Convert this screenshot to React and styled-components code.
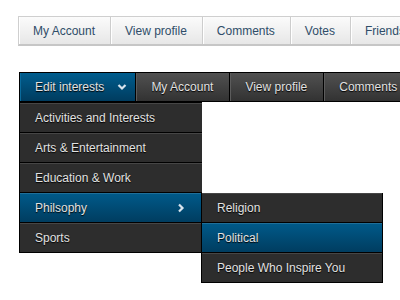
import styled, { createGlobalStyle } from "styled-components";

const GlobalStyle = createGlobalStyle`
  body {
    margin: 0;
    background: #fff;
    font-family: "Liberation Sans", Arial, sans-serif;
  }
`;

const lightItems = ["My Account", "View profile", "Comments", "Votes", "Friends"];
const darkItems = ["My Account", "View profile", "Comments", "Votes"];
const interests = [
  { label: "Activities and Interests" },
  { label: "Arts & Entertainment" },
  { label: "Education & Work" },
  { label: "Philsophy", active: true, sub: true },
  { label: "Sports" },
];
const subItems = [
  { label: "Religion" },
  { label: "Political", active: true },
  { label: "People Who Inspire You" },
];

const ChevronDown = () => (
  <svg width="10" height="8" viewBox="0 0 10 8">
    <polyline points="1.5,2 5,5.5 8.5,2" fill="none" stroke="#d8e4ee" strokeWidth="2.2" />
  </svg>
);

const ChevronRight = () => (
  <svg width="8" height="10" viewBox="0 0 8 10">
    <polyline points="2,1.5 5.5,5 2,8.5" fill="none" stroke="#d8e4ee" strokeWidth="2.2" />
  </svg>
);

const App = () => (
  <Page>
    <GlobalStyle />
    <LightBar>
      {lightItems.map((item) => (
        <LightItem key={item}>{item}</LightItem>
      ))}
    </LightBar>

    <DarkBar>
      <DarkItem $active>
        Edit interests
        <ChevronDown />
        <Dropdown>
          {interests.map((it) => (
            <MenuRow key={it.label} $active={it.active}>
              {it.label}
              {it.sub && <ChevronRight />}
              {it.sub && (
                <SubMenu>
                  {subItems.map((s) => (
                    <MenuRow key={s.label} $active={s.active}>
                      {s.label}
                    </MenuRow>
                  ))}
                </SubMenu>
              )}
            </MenuRow>
          ))}
        </Dropdown>
      </DarkItem>
      {darkItems.map((item) => (
        <DarkItem key={item}>{item}</DarkItem>
      ))}
    </DarkBar>
  </Page>
);

const Page = styled.div`
  width: 400px;
  height: 300px;
  overflow: hidden;
  padding: 16px 0 0 18px;
  box-sizing: border-box;
`;

const LightBar = styled.div`
  display: flex;
  height: 30px;
  box-sizing: border-box;
  border-top: 1px solid #cfcfcf;
  border-bottom: 2px solid #c6c6c6;
  border-left: 1px solid #cfcfcf;
  background: linear-gradient(#fbfbfb, #e7e7e7);
  white-space: nowrap;
`;

const LightItem = styled.div`
  display: flex;
  align-items: center;
  padding: 0 15px 0 14px;
  font-size: 12px;
  color: #2f4d69;
  border-right: 1px solid #cdcdcd;
  box-shadow: inset 1px 0 #fff;
`;

const DarkBar = styled.div`
  display: flex;
  margin: 26px 0 0 1px;
  height: 30px;
  box-sizing: border-box;
  border: 1px solid #000;
  border-right: none;
  background: #000;
  white-space: nowrap;
`;

const DarkItem = styled.div`
  position: relative;
  display: flex;
  align-items: center;
  gap: 13px;
  padding: 0 ${(p) => (p.$active ? "8px" : "16px")} 0 15px;
  font-size: 12px;
  color: #e2e2e2;
  text-shadow: 0 1px 1px #000;
  margin-right: 1px;
  background: ${(p) =>
    p.$active
      ? "linear-gradient(#005d8e, #003c5f)"
      : "linear-gradient(#515151, #323232)"};
  box-shadow: inset 1px 0 ${(p) => (p.$active ? "#0a6a9c" : "#5c5c5c")};
`;

const Dropdown = styled.div`
  position: absolute;
  top: 29px;
  left: -1px;
  width: 182px;
  background: #000;
  border-left: 1px solid #000;
  border-bottom: 1px solid #000;
  border-top: 1px solid #000;
  z-index: 2;
`;

const MenuRow = styled.div`
  position: relative;
  display: flex;
  align-items: center;
  justify-content: space-between;
  height: 29px;
  padding: 0 17px 0 15px;
  font-size: 12px;
  color: #e2e2e2;
  text-shadow: 0 1px 1px #000;
  border-bottom: 1px solid #000;
  box-shadow: inset 0 1px ${(p) => (p.$active ? "#1f6f9a" : "#464646")};
  background: ${(p) =>
    p.$active ? "linear-gradient(#005a8a, #003d60)" : "#2d2d2d"};
  &:last-child {
    border-bottom: none;
  }
`;

const SubMenu = styled.div`
  position: absolute;
  top: 0;
  left: 181px;
  width: 180px;
  background: #000;
  border-left: 1px solid #000;
  border-right: 1px solid #000;
  border-bottom: 1px solid #000;
  z-index: 3;
`;

export default App;
